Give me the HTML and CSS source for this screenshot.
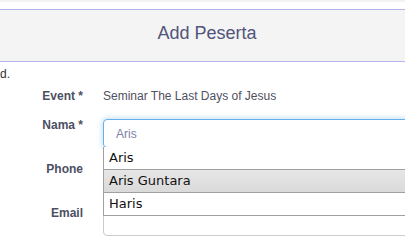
FILE: index.html
```html
<!DOCTYPE html>
<html>
    <head>
        <title>Add Peserta</title>
        <link rel="stylesheet" href="styles.css">
    </head>
    <body>
        <div class="topbar"></div>
        <div class="modal-header">
            <h4 class="modal-title">Add Peserta</h4>
        </div>
        <div class="note">d.</div>
        <form class="form">
            <div class="row row-static">
                <label class="label">Event *</label>
                <div class="static">Seminar The Last Days of Jesus</div>
            </div>
            <div class="row">
                <label class="label">Nama *</label>
                <div class="field">
                    <input class="input input-focus" type="text" value="Aris">
                    <ul class="suggest">
                        <li>Aris</li>
                        <li class="active">Aris Guntara</li>
                        <li>Haris</li>
                    </ul>
                </div>
            </div>
            <div class="row">
                <label class="label">Phone</label>
                <div class="field"><input class="input" type="text"></div>
            </div>
            <div class="row">
                <label class="label">Email</label>
                <div class="field"><input class="input" type="text"></div>
            </div>
        </form>
    </body>
</html>
```

FILE: styles.css
```css
body{
    margin: 0;
    background-color: #fff;
    font-family: "Liberation Sans", Arial, sans-serif;
    font-size: 12px;
    color: #555;
    overflow: hidden;
    height: 243px;
}
.topbar{
    height: 2px;
    background-color: #f3f3f3;
    margin-bottom: 7px;
}
.modal-header{
    border-top: 1px solid #b3b3ee;
    border-bottom: 1px solid #b3b3ee;
    background-color: #f4f4f4;
    height: 51px;
    display: flex;
    align-items: center;
    justify-content: center;
    padding-left: 9px;
}
.modal-title{
    margin: 0 0 4px 0;
    font-size: 18px;
    font-weight: normal;
    color: #51557a;
}
.note{
    height: 14px;
    line-height: 14px;
    margin-top: 5px;
    color: #333;
}
.form{
    margin-top: 9px;
}
.row{
    display: flex;
    gap: 20px;
    height: 44px;
}
.row-static{
    height: 29px;
}
.label{
    flex-shrink: 0;
    width: 83px;
    text-align: right;
    font-weight: bold;
    color: #4d4f63;
    line-height: 12px;
}
.static{
    line-height: 12px;
    color: #4f5060;
}
.field{
    flex-shrink: 0;
    position: relative;
    width: 320px;
}
.input{
    box-sizing: border-box;
    width: 100%;
    height: 29px;
    border: 1px solid #ccc;
    border-radius: 4px;
    padding: 0 12px;
    font-family: "Liberation Sans", Arial, sans-serif;
    font-size: 12px;
    color: #7c80a6;
}
.input-focus{
    border-color: #66afe9;
    box-shadow: 0 0 6px rgba(102, 175, 233, 0.5);
    outline: none;
}
.suggest{
    position: absolute;
    left: 0;
    top: 28px;
    width: 100%;
    margin: 0;
    padding: 0;
    list-style: none;
    background-color: #fff;
    border-left: 1px solid #a0a0a0;
    z-index: 2;
}
.suggest li{
    height: 22px;
    line-height: 22px;
    border-bottom: 1px solid #a0a0a0;
    padding-left: 5px;
    font-family: "DejaVu Sans", Verdana, sans-serif;
    font-size: 13px;
    color: #111;
}
.suggest li.active{
    background: linear-gradient(#e6e6e6, #dadada);
}
```
